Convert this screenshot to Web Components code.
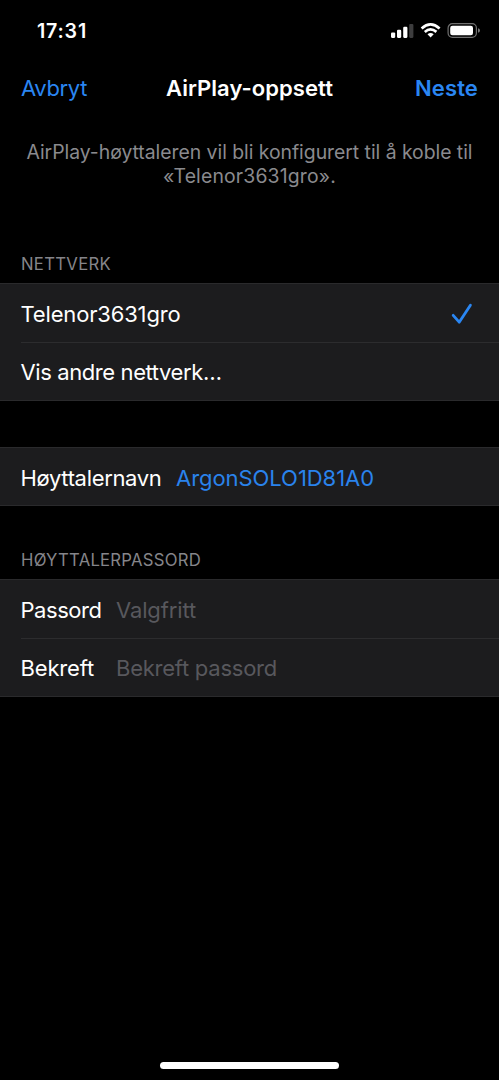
<!DOCTYPE html>
<html lang="nb">
<head>
<meta charset="utf-8">
<title>AirPlay-oppsett</title>
<style>
html,body{margin:0;background:#000}
body{font-family:Inter,"Liberation Sans",sans-serif;color:#fff}
</style>
</head>
<body>
<phone-screen>
  <status-bar slot="top"></status-bar>
  <nav-bar slot="top">
    <fit-text slot="left" width="66">Avbryt</fit-text>
    <fit-text slot="title" width="167">AirPlay-oppsett</fit-text>
    <fit-text slot="right" width="63">Neste</fit-text>
  </nav-bar>
  <intro-note>
    <fit-text width="446">AirPlay-høyttaleren vil bli konfigurert til å koble til</fit-text>
    <fit-text width="173">«Telenor3631gro».</fit-text>
  </intro-note>
  <list-group style="height:147px">
    <fit-text slot="header" width="90">NETTVERK</fit-text>
    <list-row checked><fit-text width="160">Telenor3631gro</fit-text></list-row>
    <list-row><fit-text width="201">Vis andre nettverk…</fit-text></list-row>
  </list-group>
  <list-group style="height:59px;margin-top:46px">
    <list-row style="--height:57px;--gap:14.5px"><fit-text width="141">Høyttalernavn</fit-text><fit-text slot="value" width="198" style="color:#2a83ec">ArgonSOLO1D81A0</fit-text></list-row>
  </list-group>
  <list-group style="margin-top:44px">
    <fit-text slot="header" width="180">HØYTTALERPASSORD</fit-text>
    <list-row style="--label:95.5px"><fit-text width="81">Passord</fit-text><fit-text slot="value" width="80">Valgfritt</fit-text></list-row>
    <list-row style="--label:95.5px"><fit-text width="73.5">Bekreft</fit-text><fit-text slot="value" width="161">Bekreft passord</fit-text></list-row>
  </list-group>
  <home-indicator slot="bottom"></home-indicator>
</phone-screen>
<script>
const define = (name, html, setup) => {
  const template = document.createElement('template');
  template.innerHTML = html;
  customElements.define(name, class extends HTMLElement {
    connectedCallback() {
      if (this.shadowRoot) return;
      this.attachShadow({mode: 'open'}).append(template.content.cloneNode(true));
      if (setup) setup(this);
    }
  });
};

define('phone-screen', `<style>
:host{display:flex;flex-direction:column;width:499px;height:1080px;background:#000;overflow:hidden}
main{flex:1}
</style><slot name="top"></slot><main><slot></slot></main><slot name="bottom"></slot>`);

define('status-bar', `<style>
:host{display:flex;justify-content:space-between;height:60px;box-sizing:border-box;padding:19px 18px 0 37px}
fit-text{font-size:19.6px;font-weight:560;line-height:24px}
svg{display:block;margin-top:3px}
</style><fit-text width="50">17:31</fit-text>
<svg width="90" height="18" viewBox="0 0 90 18">
<g fill="#fff"><rect x="0" y="10.5" width="4.2" height="5.4" rx="1.1"/><rect x="6" y="7.8" width="4.2" height="8.1" rx="1.1"/><rect x="12.2" y="4.8" width="4.2" height="11.1" rx="1.1"/><rect x="18.2" y="2" width="4.2" height="13.9" rx="1.1" fill="#3d3d3e"/></g>
<g fill="none" stroke="#fff" stroke-width="2.7"><path d="M30.6 6.4Q39.5-1.5 48.6 6.4"/><path d="M33.8 9.9Q39.5 4.9 45.4 9.9"/></g><path fill="#fff" d="M36.5 12.3Q39.6 9.9 42.7 12.3L39.6 15.6Z"/>
<rect x="57.1" y="1.7" width="28.3" height="13.7" rx="4.3" fill="none" stroke="#707070" stroke-width="1.2"/><rect x="59.2" y="3.8" width="22.8" height="9.5" rx="2.3" fill="#fff"/><path d="M87 6.2Q89 6.8 89 8.5T87 10.8Z" fill="#777"/>
</svg>`);

define('nav-bar', `<style>
:host{display:grid;grid-template-columns:1fr auto 1fr;align-items:center;height:56px;padding:0 21px;font-size:22px;line-height:28px}
.left,.right{color:#2a86f2}.right{justify-self:end}.right,.title{font-weight:580}
</style><div class="left"><slot name="left"></slot></div><div class="title"><slot name="title"></slot></div><div class="right"><slot name="right"></slot></div>`);

define('intro-note', `<style>
:host{display:flex;flex-direction:column;align-items:center;height:113px;padding-top:25px;font-size:19.4px;line-height:23.5px;color:#8a8a8e}
</style><slot></slot>`);

define('list-group', `<style>
:host{display:block}
header{font-size:16.7px;line-height:20px;color:#85858a;padding:0 0 9px 21px}
header.empty{display:none}
section{background:#1c1c1e;border-top:1px solid #2a2a2c;border-bottom:1px solid #2a2a2c}
</style><header><slot name="header"></slot></header><section><slot></slot></section>`,
el => {
  if (!el.querySelector('[slot=header]')) el.shadowRoot.querySelector('header').className = 'empty';
});

define('list-row', `<style>
:host{display:block;padding-left:20.5px;font-size:22px;line-height:28px}
.row{box-sizing:border-box;display:flex;align-items:center;height:var(--height,57.5px);padding:2px 26px 0 0}
.label{min-width:var(--label,0);margin-right:var(--gap,0)}
.value{color:#58585d}
svg{display:none;margin-left:auto}
:host([checked]) svg{display:block}
:host(:not(:last-of-type))::after{content:"";display:block;height:1px;background:#2c2c2e}
</style><div class="row"><div class="label"><slot></slot></div><div class="value"><slot name="value"></slot></div>
<svg width="22" height="22" viewBox="0 0 22 22" fill="none" stroke="#2a86f2" stroke-width="2.8" stroke-linecap="round" stroke-linejoin="round"><path d="M2.2 12.3L8.2 19.2L19.4 2.2"/></svg></div>`);

define('home-indicator', `<style>
:host{display:flex;justify-content:center;height:18px}
i{width:179px;height:7px;border-radius:4px;background:#fff}
</style><i></i>`);

/* A single line whose tracking adapts to the requested advance width. */
define('fit-text', `<style>
:host{display:block;width:max-content;white-space:pre}
span{display:inline-block}
</style><span><slot></slot></span>`);

const fit = root => root.querySelectorAll('*').forEach(el => {
  if (el.localName === 'fit-text') {
    const want = Number(el.getAttribute('width'));
    const have = el.shadowRoot.querySelector('span').getBoundingClientRect().width;
    el.style.letterSpacing = (want - have) / el.textContent.length + 'px';
  }
  if (el.shadowRoot) fit(el.shadowRoot);
});
fit(document);
</script>
</body>
</html>
